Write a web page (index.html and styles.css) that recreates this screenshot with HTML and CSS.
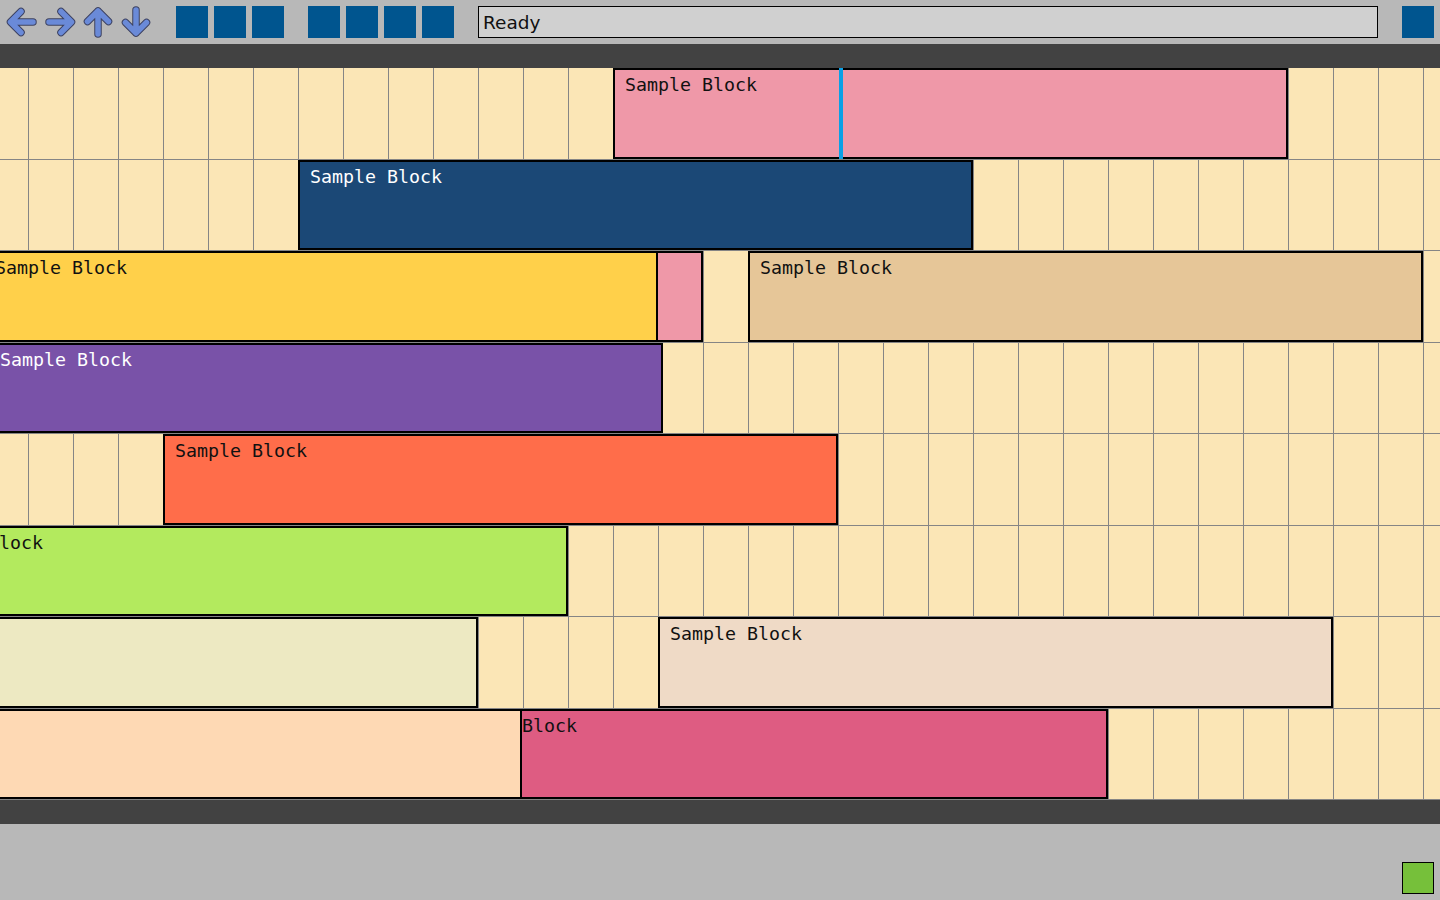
FILE: index.html
```html
<!DOCTYPE html>
<html>
<head>
<meta charset="utf-8">
<title>Timeline</title>
<link rel="stylesheet" href="styles.css">
</head>
<body>
<div class="app">
  <div class="toolbar">
    <div class="tool-group">
      <svg class="icon" viewBox="0 0 32 32"><g class="arr-o"><path d="M5 16H27M15 5.5L4.5 16L15 26.5"/></g><g class="arr-i"><path d="M5 16H27M15 5.5L4.5 16L15 26.5"/></g></svg>
      <svg class="icon" viewBox="0 0 32 32"><g class="arr-o"><path d="M27 16H5M17 5.5L27.5 16L17 26.5"/></g><g class="arr-i"><path d="M27 16H5M17 5.5L27.5 16L17 26.5"/></g></svg>
      <svg class="icon" viewBox="0 0 32 32"><g class="arr-o"><path d="M16 5V28M5.5 15.5L16 5L26.5 15.5"/></g><g class="arr-i"><path d="M16 5V28M5.5 15.5L16 5L26.5 15.5"/></g></svg>
      <svg class="icon" viewBox="0 0 32 32"><g class="arr-o"><path d="M16 27V4M5.5 16.5L16 27L26.5 16.5"/></g><g class="arr-i"><path d="M16 27V4M5.5 16.5L16 27L26.5 16.5"/></g></svg>
    </div>
    <div class="tool-group">
      <div class="btn"></div><div class="btn"></div><div class="btn"></div>
    </div>
    <div class="tool-group">
      <div class="btn"></div><div class="btn"></div><div class="btn"></div><div class="btn"></div>
    </div>
    <div class="status">Ready</div>
    <div class="btn"></div>
  </div>
  <div class="sep"></div>
  <div class="grid">
    <div class="row">
      <div class="block c-pink" style="left:613px;width:675px"><span>Sample Block</span></div>
      <div class="cursor" style="left:839px"></div>
    </div>
    <div class="row">
      <div class="block c-navy" style="left:298px;width:675px"><span>Sample Block</span></div>
    </div>
    <div class="row">
      <div class="block c-yellow" style="left:-17px;width:675px"><span>Sample Block</span></div>
      <div class="block c-pink" style="left:656px;width:47px"><span></span></div>
      <div class="block c-tan" style="left:748px;width:675px"><span>Sample Block</span></div>
    </div>
    <div class="row">
      <div class="block c-purple" style="left:-12px;width:675px"><span>Sample Block</span></div>
    </div>
    <div class="row">
      <div class="block c-orange" style="left:163px;width:675px"><span>Sample Block</span></div>
    </div>
    <div class="row">
      <div class="block c-lime" style="left:-101px;width:669px"><span>Sample Block</span></div>
    </div>
    <div class="row">
      <div class="block c-cream" style="left:-197px;width:675px"><span>Sample Block</span></div>
      <div class="block c-beige" style="left:658px;width:675px"><span>Sample Block</span></div>
    </div>
    <div class="row">
      <div class="block c-rose" style="left:433px;width:675px"><span>Sample Block</span></div>
      <div class="block c-peach" style="left:-153px;width:675px"><span>Sample Block</span></div>
    </div>
  </div>
  <div class="sep"></div>
  <div class="footer">
    <div class="ok"></div>
  </div>
</div>
</body>
</html>
```
FILE: styles.css
```css
* { box-sizing: border-box; }
html, body { margin: 0; padding: 0; }
body {
  width: 1440px;
  height: 900px;
  overflow: hidden;
  background: #b8b8b8;
  font-family: "DejaVu Sans", sans-serif;
}
.app {
  display: flex;
  flex-direction: column;
  height: 900px;
}
.toolbar {
  height: 44px;
  padding: 6px;
  display: flex;
  gap: 24px;
  background: #b8b8b8;
}
.tool-group {
  display: flex;
  gap: 6px;
}
.icon {
  width: 32px;
  height: 32px;
  display: block;
}
.arr-o path {
  fill: none;
  stroke: #3c4160;
  stroke-width: 7.5;
  stroke-linecap: round;
  stroke-linejoin: round;
}
.arr-i path {
  fill: none;
  stroke: #6a8ad8;
  stroke-width: 5.5;
  stroke-linecap: round;
  stroke-linejoin: round;
}
.btn {
  width: 32px;
  height: 32px;
  background: #00558f;
  flex: none;
}
.status {
  flex: 1;
  height: 32px;
  background: #d0d0d0;
  border: 1px solid #000;
  padding: 0 4px;
  font-size: 18.5px;
  line-height: 31px;
  color: #111;
}
.sep {
  height: 24px;
  background: #424242;
  flex: none;
}
.grid {
  height: 732px;
  display: grid;
  grid-template-rows: repeat(8, 1fr);
  background-color: #fbe6b6;
  overflow: hidden;
}
.row {
  position: relative;
  background-image: linear-gradient(to right, #858585 0, #858585 1px, transparent 1px);
  background-size: 45px 100%;
  background-position: 28px 0;
  border-bottom: 1px solid #858585;
}
.block {
  position: absolute;
  top: 0;
  bottom: 0;
  border: 2px solid #000;
  padding: 4px 10px;
  font-family: "DejaVu Sans Mono", monospace;
  font-size: 18.3px;
  line-height: 22px;
  color: #111;
  white-space: nowrap;
  overflow: hidden;
}
.c-pink { background: #ef98a8; }
.c-navy { background: #1b4876; color: #fff; }
.c-yellow { background: #ffd04a; }
.c-tan { background: #e6c698; }
.c-purple { background: #7952a8; color: #fff; }
.c-orange { background: #ff6d4a; }
.c-lime { background: #b3ea5e; }
.c-cream { background: #ede9c2; }
.c-beige { background: #efdac6; }
.c-rose { background: #de5c82; }
.c-peach { background: #fed9b4; }
.cursor {
  position: absolute;
  top: 0;
  bottom: 0;
  width: 4px;
  background: #0aa0e6;
}
.footer {
  flex: 1;
  display: flex;
  justify-content: flex-end;
  align-items: flex-end;
  padding: 6px;
  background: #b8b8b8;
}
.ok {
  width: 32px;
  height: 32px;
  background: #76c03a;
  border: 1px solid #000;
}
```
